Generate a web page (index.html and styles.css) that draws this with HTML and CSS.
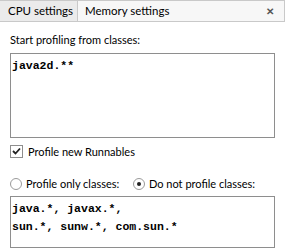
FILE: index.html
```html
<!DOCTYPE html>
<html lang="en">
<head>
    <meta charset="UTF-8">
    <title>Profiler settings</title>
    <link rel="stylesheet" href="styles.css">
</head>
<body>
    <div class="tabs">
        <div class="tab active">CPU settings</div>
        <div class="tab">Memory settings</div>
        <div class="spacer"></div>
        <div class="close">&#x2715;</div>
    </div>
    <div class="panel">
        <div class="label">Start profiling from classes:</div>
        <div class="box big">
            <div class="line">java2d.**</div>
        </div>
        <label class="check">
            <span class="checkbox">
                <svg width="9" height="9" viewBox="0 0 9 9"><path d="M1 4 L3.5 6.5 L8 1.5" fill="none" stroke="#222" stroke-width="1.8"/></svg>
            </span>
            Profile new Runnables
        </label>
        <div class="radios">
            <label class="radio"><span class="dot"></span>Profile only classes:</label>
            <label class="radio"><span class="dot on"></span>Do not profile classes:</label>
        </div>
        <div class="box small">
            <div class="line">java.*, javax.*,</div>
            <div class="line">sun.*, sunw.*, com.sun.*</div>
        </div>
    </div>
</body>
</html>
```
FILE: styles.css
```css
body {
    margin: 0;
    font-family: Lato, sans-serif;
    font-size: 11px;
    color: #000;
    background: #fff;
    width: 285px;
    height: 248px;
    overflow: hidden;
    white-space: nowrap;
}
.tabs {
    display: flex;
    height: 20px;
    border-top: 1px solid #c9c9c9;
    border-bottom: 1px solid #c9c9c9;
    border-right: 1px solid #c9c9c9;
    background: #f7f7f7;
    font-size: 11.5px;
}
.tab {
    padding: 0 7px;
    line-height: 20px;
}
.tab.active {
    width: 61px;
    background: #ebebeb;
    padding: 0 8px;
    border-right: 1px solid #c9c9c9;
}
.spacer {
    flex: 1;
}
.close {
    width: 18px;
    line-height: 20px;
    font-size: 10px;
    font-weight: bold;
    color: #555;
}
.panel {
    padding: 11px 10px 0 10px;
}
.label {
    line-height: 14px;
}
.box {
    border: 1px solid #8e8e8e;
    margin-top: 6px;
    padding: 3px 1px;
    font-family: "Liberation Mono", monospace;
    font-size: 11.5px;
    font-weight: bold;
}
.box.big {
    height: 77px;
}
.box.small {
    height: 44px;
    margin-top: 6px;
}
.line {
    line-height: 18px;
}
.check {
    display: flex;
    align-items: center;
    gap: 5px;
    margin-top: 7px;
    height: 13px;
}
.checkbox {
    width: 11px;
    height: 11px;
    border: 1px solid #8e8e8e;
    display: flex;
    align-items: center;
    justify-content: center;
}
.radios {
    display: flex;
    margin-top: 19px;
    height: 13px;
}
.radio {
    display: flex;
    align-items: center;
    gap: 4px;
}
.radio:first-child {
    width: 123px;
}
.dot {
    width: 10px;
    height: 10px;
    border: 1px solid #9a9a9a;
    border-radius: 50%;
    display: flex;
    align-items: center;
    justify-content: center;
}
.dot.on::after {
    content: "";
    width: 4px;
    height: 4px;
    border-radius: 50%;
    background: #222;
}
```
